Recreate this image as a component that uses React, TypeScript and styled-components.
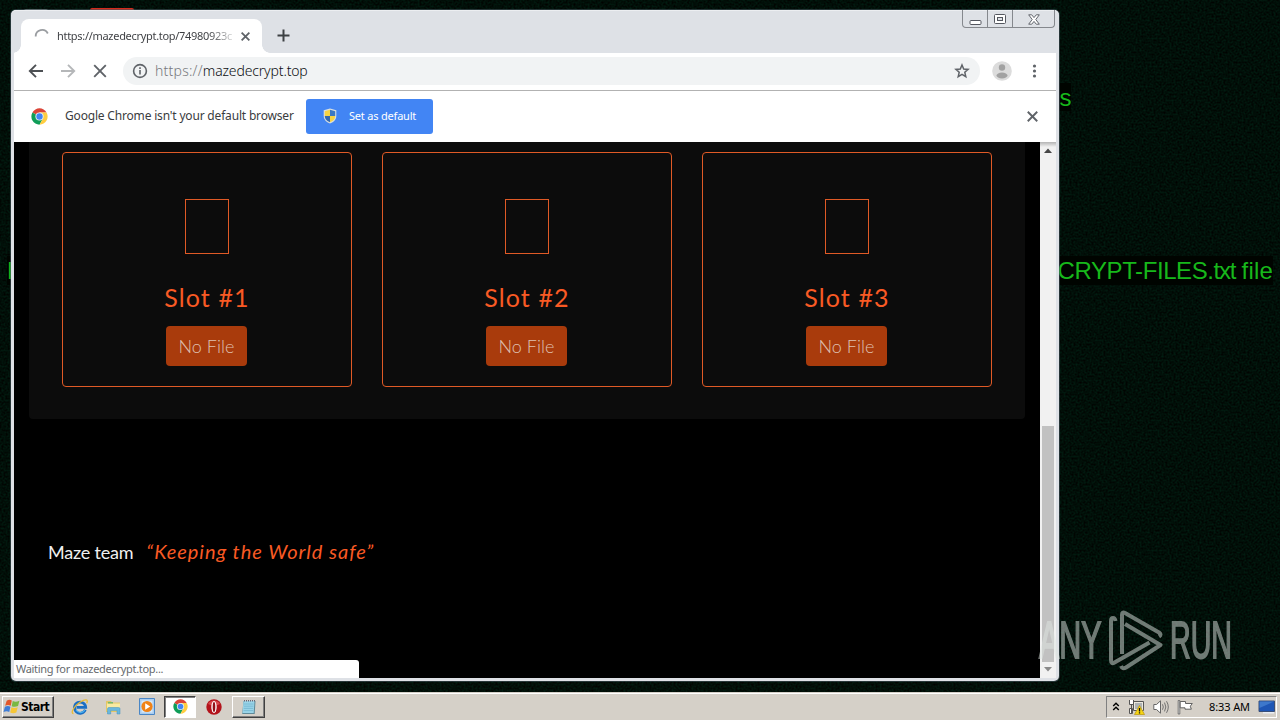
import React from "react";
import styled, { createGlobalStyle, css } from "styled-components";

const ui = `"Noto Sans", "Open Sans", sans-serif`;
const page = `Lato, "Open Sans", sans-serif`;

const Global = createGlobalStyle`
  body { margin: 0; background: #02110a; overflow: hidden; }
  * { box-sizing: border-box; }
  svg { display: block; flex: none; }
`;

const Desktop = styled.div`
  position: relative;
  width: 1280px;
  height: 720px;
  overflow: hidden;
  background: #02110a;
  display: flex;
  flex-direction: column;
  justify-content: flex-end;
`;
const Grain = styled.svg`
  position: absolute;
  inset: 0;
`;
const WallText = styled.div<{ $x?: number; $right?: number; $y: number; $h: number }>`
  position: absolute;
  ${(p) => (p.$right !== undefined ? `right: ${p.$right}px;` : `left: ${p.$x}px;`)}
  top: ${(p) => p.$y}px;
  height: ${(p) => p.$h}px;
  background: #000400;
  color: #17b81b;
  font: 24px "Liberation Sans", sans-serif;
  line-height: ${(p) => p.$h + 1}px;
  letter-spacing: -0.42px;
  white-space: pre;
`;
const Tracked = styled.span<{ $by: number }>`
  letter-spacing: ${(p) => p.$by}px;
`;
const Shortcut = styled.div<{ $x: number; $w: number; $y: number; $c: string }>`
  position: absolute;
  left: ${(p) => p.$x}px;
  top: ${(p) => p.$y}px;
  width: ${(p) => p.$w}px;
  height: 8px;
  background: ${(p) => p.$c};
  border-radius: 2px;
`;

const Window = styled.div`
  position: absolute;
  left: 11px;
  top: 10px;
  width: 1048px;
  height: 671px;
  background: #dee1e6;
  border-radius: 5px;
  padding: 0 3px 3px;
  display: flex;
  flex-direction: column;
  box-shadow: inset 0 1px 0 #eceef1, 0 0 0 1px rgba(70, 85, 95, 0.55);
`;
const TabStrip = styled.div`
  height: 43px;
  flex: none;
  display: flex;
  padding: 9px 0 0 7px;
  align-items: flex-start;
`;
const Tab = styled.div`
  position: relative;
  width: 241px;
  height: 34px;
  background: #fff;
  border-radius: 8px 8px 0 0;
  display: flex;
  align-items: center;
  padding: 0 10px 0 13px;
  &::before,
  &::after {
    content: "";
    position: absolute;
    bottom: 0;
    width: 8px;
    height: 8px;
  }
  &::before { left: -8px; background: radial-gradient(circle at 0 0, #dee1e6 7.5px, #fff 8px); }
  &::after { right: -8px; background: radial-gradient(circle at 100% 0, #dee1e6 7.5px, #fff 8px); }
`;
const TabTitle = styled.div`
  width: 178px;
  margin: 0 6px 0 7px;
  white-space: nowrap;
  font: 11px/18px ${ui};
  letter-spacing: -0.3px;
  background: linear-gradient(90deg, #3a3c40 152px, rgba(60, 64, 67, 0.15) 177px);
  -webkit-background-clip: text;
  color: transparent;
`;
const NewTab = styled.div`
  margin: 10px 0 0 15px;
`;
const WinButtons = styled.div`
  margin: -9px 1px 0 auto;
  height: 18px;
  display: flex;
  border: 1px solid #85888d;
  border-top: 0;
  border-radius: 0 0 4px 4px;
`;
const WinButton = styled.div<{ $w: number }>`
  width: ${(p) => p.$w}px;
  display: flex;
  justify-content: center;
  align-items: center;
  padding-top: 1px;
  & + & { border-left: 1px solid #85888d; }
`;
const Toolbar = styled.div`
  height: 38px;
  flex: none;
  background: #fff;
  border-bottom: 1px solid #b2b2b2;
  display: flex;
  align-items: center;
  padding: 0 14px 1px 14px;
  & > * { flex: none; }
`;
const NavIcons = styled.div`
  display: flex;
  gap: 16px;
  width: 95px;
`;
const Omnibox = styled.div`
  width: 857px;
  height: 28px;
  border-radius: 14px;
  background: #f1f3f4;
  display: flex;
  align-items: center;
  padding: 0 10px 0 9px;
`;
const Url = styled.div`
  flex: 1;
  margin-left: 7px;
  font: 14px/20px ${ui};
  font-weight: 300;
  letter-spacing: -0.15px;
  color: #0d0f12;
  span { color: #77797d; letter-spacing: 0.23px; }
`;
const Avatar = styled.div`
  margin: 0 14px 0 12px;
`;
const InfoBar = styled.div`
  height: 51px;
  flex: none;
  background: #fff;
  display: flex;
  align-items: center;
  padding: 0 18px 0 17px;
`;
const InfoText = styled.div`
  width: 229px;
  margin: -1px 12px 0 17px;
  font: 12px/18px ${ui};
  letter-spacing: -0.18px;
  color: #3a3c40;
  white-space: nowrap;
`;
const DefaultButton = styled.div`
  width: 127px;
  height: 35px;
  border-radius: 3px;
  background: #4285f4;
  color: #fff;
  display: flex;
  align-items: center;
  padding: 0 0 1px 17px;
  gap: 12px;
  font: 11px/18px ${ui};
  letter-spacing: -0.2px;
  white-space: nowrap;
`;
const Push = styled.div`
  margin: -1px 0 0 auto;
`;
const Viewport = styled.div`
  flex: 1;
  min-height: 0;
  display: flex;
  background: #000;
`;
const Page = styled.div`
  position: relative;
  flex: 1;
  display: flex;
  flex-direction: column;
`;
const Panel = styled.div`
  margin: 0 15px;
  height: 277px;
  background: #0c0c0c;
  border-radius: 0 0 4px 4px;
  padding: 10px 33px 0;
  display: flex;
  gap: 30px;
`;
const SlotCard = styled.div`
  width: 290px;
  height: 235px;
  border: 1px solid #e05a26;
  border-radius: 4px;
  display: flex;
  flex-direction: column;
  align-items: center;
  padding-top: 46px;
`;
const MissingGlyph = styled.div`
  width: 44px;
  height: 55px;
  border: 1px solid #e05a26;
`;
const SlotTitle = styled.div`
  margin-top: 28px;
  font: 25px/30px ${page};
  letter-spacing: 1.1px;
  color: #f95a24;
`;
const Badge = styled.div`
  margin: 14px 1px 0 0;
  width: 81px;
  height: 40px;
  border-radius: 4px;
  background: #a93b0c;
  color: #dfc0b0;
  display: flex;
  align-items: center;
  justify-content: center;
  font: 300 18px/24px ${page};
  letter-spacing: 0.05px;
`;
const Footer = styled.div`
  margin: 119px 0 0 34px;
  display: flex;
  align-items: center;
  gap: 13px;
  font: 18px/28px ${page};
  color: #f0f0f0;
  letter-spacing: -0.2px;
`;
const Motto = styled.em`
  color: #f95a24;
  letter-spacing: 0.97px;
  font-size: 20px;
  line-height: 26px;
  padding-bottom: 2px;
`;
const Status = styled.div`
  position: absolute;
  left: 0;
  bottom: 0;
  width: 345px;
  height: 18px;
  border-radius: 0 3px 0 0;
  background: #fff;
  color: #66696d;
  padding-left: 2px;
  font: 11px/18px ${ui};
  letter-spacing: -0.3px;
`;
const ScrollBar = styled.div`
  width: 16px;
  background: linear-gradient(#b4b4b4, #f1f1f1 5px);
  display: flex;
  flex-direction: column;
  align-items: center;
  padding: 6px 0 6px;
`;
const Thumb = styled.div`
  width: 12px;
  height: 236px;
  margin: auto 0 5px;
  background: #c1c1c1;
`;

const Taskbar = styled.div`
  position: relative;
  height: 28px;
  background: #d5d0c8;
  border-top: 1px solid #d5d0c8;
  box-shadow: inset 0 1px 0 #fff;
  display: flex;
  align-items: center;
  padding: 2px 3px 2px 2px;
`;
const raised = css`
  border: 1px solid;
  border-color: #fff #404040 #404040 #fff;
  box-shadow: inset -1px -1px 0 #808080;
`;
const Start = styled.div`
  ${raised}
  width: 52px;
  height: 22px;
  display: flex;
  align-items: center;
  padding-left: 0;
  font: bold 12px/18px "DejaVu Sans Condensed", ${ui};
  letter-spacing: -0.5px;
  color: #000;
`;
const TaskItem = styled.div<{ $w: number; $look?: "raised" | "pressed" }>`
  width: ${(p) => p.$w}px;
  height: 22px;
  display: flex;
  align-items: center;
  justify-content: center;
  ${(p) => p.$look === "raised" && raised}
  ${(p) =>
    p.$look === "pressed" &&
    css`
      background: #fff;
      border: 1px solid;
      border-color: #404040 #fff #fff #404040;
      box-shadow: inset 1px 1px 0 #808080;
    `}
`;
const Quick = styled.div`
  display: flex;
  margin-left: 9px;
`;
const Tray = styled.div`
  margin-left: auto;
  width: 171px;
  height: 22px;
  border: 1px solid;
  border-color: #808080 #fff #fff #808080;
  display: flex;
  align-items: center;
  padding: 0 0 0 5px;
`;
const TrayIcons = styled.div`
  display: flex;
  align-items: center;
  gap: 8px;
`;
const Clock = styled.div`
  margin: 0 8px 0 auto;
  font: 11px/18px ${ui};
  letter-spacing: -0.1px;
  color: #000;
  white-space: nowrap;
`;

const Watermark = styled.div`
  position: absolute;
  left: 1039px;
  top: 608px;
  width: 192px;
  height: 66px;
  display: flex;
  justify-content: space-between;
  align-items: center;
  opacity: 0.5;
  color: #dfe6e2;
`;
const Word = styled.div<{ $squeeze: number }>`
  width: 61px;
  height: 66px;
  span {
    display: block;
    width: max-content;
    transform-origin: 0 0;
    transform: scaleX(${(p) => p.$squeeze});
    font: 52px/65px "Liberation Sans", sans-serif;
    -webkit-text-stroke: 1.8px #dfe6e2;
  }
`;

const Cross = ({ size, w = 2, color = "#5f6368" }: { size: number; w?: number; color?: string }) => (
  <svg width={size} height={size} viewBox="0 0 10 10" stroke={color} strokeWidth={(w * 10) / size}>
    <path d="M.7.7 9.3 9.3M9.3.7.7 9.3" />
  </svg>
);

const ChromeLogo = ({ size }: { size: number }) => (
  <svg width={size} height={size} viewBox="0 0 48 48">
    <circle cx="24" cy="24" r="23" fill="#fff" />
    <path d="M24 24 4.1 12.5A23 23 0 0 1 43.9 12.5H24z" fill="#db4437" />
    <path d="M4.1 12.5A23 23 0 0 0 24 47l10-17.3L24 24z" fill="#0f9d58" />
    <path d="M43.9 12.5A23 23 0 0 1 24 47l10-17.3L24 12.5z" fill="#ffcd40" />
    <circle cx="24" cy="24" r="11.5" fill="#f1f1f1" />
    <circle cx="24" cy="24" r="9" fill="#4285f4" />
  </svg>
);

const Shield = () => (
  <svg width="14" height="16" viewBox="0 0 14 16">
    <path d="M7 .5 13.3 2.3V8C13.300 12 10 14.500 7 15.600 4 14.500.7 12 .7 8V2.300z" fill="#d9dfe0" />
    <path d="M7 1.700V8H1.800V3.200z" fill="#f7d444" />
    <path d="M7 1.700V8h5.200V3.200z" fill="#3a78c4" />
    <path d="M7 14.300V8H1.800c0 3.300 2.600 5.300 5.200 6.300z" fill="#3569b0" />
    <path d="M7 14.300V8h5.200c0 3.300-2.600 5.300-5.200 6.300z" fill="#f7d444" />
  </svg>
);

const StartFlag = () => (
  <svg width="18" height="17" viewBox="0 0 17 16">
    <path d="M3.500 2.500Q6 .8 8.300 2.300L7.300 7.300Q4.800 6 2 7.300z" fill="#e2572b" />
    <path d="M9.200 2.800Q12 4.300 15.500 2.500L14.200 7.600Q11 9 8.200 7.700z" fill="#79b843" />
    <path d="M1.800 8.200Q4.700 7 7 8.200L5.900 13.200Q3.400 11.900.5 13.300z" fill="#3f7dd6" />
    <path d="M8 8.700Q11 10 13.900 8.600L12.600 13.700Q9.500 15 6.800 13.600z" fill="#f6c636" />
  </svg>
);

const IE = () => (
  <svg width="18" height="18" viewBox="0 0 18 18" fill="none">
    <path d="M14.300 11.800A5.600 5.600 0 1 1 14.700 9.300H5.500" stroke="#1b6fc4" strokeWidth="2.800" />
    <path d="M13.800 12.200A5.200 5.200 0 0 1 5 12" stroke="#4db1ee" strokeWidth="1.200" />
    <path d="M2.500 15.500C-1 15.500 3 8 9 4.300S17.500 1.500 15.700 5.300" stroke="#e9bb36" strokeWidth="1.300" />
  </svg>
);

const Explorer = () => (
  <svg width="17" height="16" viewBox="0 0 17 16">
    <path d="M1 2h5l1 1.500h8V13H1z" fill="#e3c766" />
    <path d="M2 4.500h13V12H2z" fill="#f8eaa2" />
    <path d="M3 3h5v1.500H3z" fill="#77b96a" />
    <path d="M2.500 15V9.800Q2.500 8.500 4 8.500h9.500q1.500 0 1.500 1.300V15h-3v-3.500H5.700V15z" fill="#69b7dd" stroke="#4591bd" strokeWidth=".5" />
  </svg>
);

const Player = () => (
  <svg width="16" height="17" viewBox="0 0 16 17">
    <path d="M.5.5h15v16H.5z" fill="#a9cdf0" stroke="#4a86c5" />
    <path d="M2.500 2.500h11v12h-11z" fill="#d7e8f8" />
    <circle cx="8" cy="8.500" r="5.600" fill="#f08317" />
    <path d="M6.200 5.300v6.400l5-3.200z" fill="#fff" />
  </svg>
);

const Opera = () => (
  <svg width="16" height="16" viewBox="0 0 16 16">
    <circle cx="8" cy="8" r="7.700" fill="#b3131b" />
    <path d="M2 5A7 7 0 0 1 14 5Q8 8 2 5z" fill="#d8484c" />
    <ellipse cx="8" cy="8" rx="2.700" ry="5.900" fill="#fff" />
    <ellipse cx="8" cy="8" rx="1.300" ry="5" fill="#931017" />
  </svg>
);

const Notepad = () => (
  <svg width="16" height="16" viewBox="0 0 16 16">
    <path d="M2.500 2h12l-.8 13H1.200z" fill="#5f8a99" />
    <path d="M2.500 2h11l-.8 12H1.500z" fill="#9ad4e8" />
    <path d="M3 5h9.500M2.900 7.200h9.500M2.700 9.400h9.500M2.600 11.600h9.500" stroke="#71b5cf" strokeWidth=".8" />
    <path d="M3 1.800h11" stroke="#667" strokeWidth="1.500" strokeDasharray="1 1" />
  </svg>
);

const NetworkIcon = () => (
  <svg width="17" height="16" viewBox="0 0 17 16">
    <path d="M5.500 2.500h10v9h-10z" fill="#ece9df" stroke="#555" />
    <path d="M7 4h7v6H7z" fill="#aeb3b5" />
    <path d="M1.500 1v4.500h4V1M3.500 5.500v9M1.500 9.500h3v5h-3z" fill="#fff" stroke="#555" />
    <path d="M11.500 6.500 16.500 15.500h-10z" fill="#f6d513" stroke="#b99408" strokeWidth=".7" />
    <path d="M11.500 9v3.500M11.500 13.300v1.300" stroke="#111" strokeWidth="1.300" />
  </svg>
);

const Speaker = () => (
  <svg width="16" height="16" viewBox="0 0 16 16" fill="none" stroke="#666">
    <path d="M.8 5.500h2.700L7.500 1.800v12.400L3.500 10.500H.8z" fill="#fff" />
    <path d="M9.500 5.300q1.600 2.700 0 5.400M11.500 3.600q2.700 4.400 0 8.800M13.500 2.200q3.600 5.800 0 11.600" strokeWidth=".9" />
  </svg>
);

const FlagIcon = () => (
  <svg width="17" height="16" viewBox="0 0 17 16">
    <path d="M1.200 1.500h1.600v13.500H1.200z" fill="#fff" stroke="#555" strokeWidth=".8" />
    <path d="M3.200 2.500h5.300v2h6.800l-2 2.700 1 3H8V8.800H3.200z" fill="#fff" stroke="#555" strokeWidth=".9" />
  </svg>
);

const DesktopIcon = () => (
  <svg width="18" height="14" viewBox="0 0 18 14">
    <path d="M1 1h15.500v10.500H1z" fill="#1e56b5" stroke="#3a4f77" />
    <path d="M1.500 1.500H16L1.500 8z" fill="#3d78cc" />
    <path d="M5 12h11v1.500H5z" fill="#e8edf4" />
  </svg>
);

const PlayMark = () => (
  <svg width="56" height="64" viewBox="0 0 56 64" fill="none" stroke="#dfe6e2" strokeWidth="4" strokeLinejoin="round">
    <path d="M8.500 12Q8 9 6 9Q4 9 4 12V51Q4 55.500 7.500 53.500L42.500 33.500" />
    <path d="M15 45V6Q15 2.500 18 4L52 23.500Q55 25.500 52 27.500" />
    <path d="M18 15 53.500 36 19 58.500Q15.500 60.500 14 57" />
  </svg>
);

export default function App() {
  return (
    <>
      <Global />
      <Desktop>
        <Grain width="1280" height="720">
          <filter id="grain" colorInterpolationFilters="sRGB">
            <feTurbulence type="fractalNoise" baseFrequency="0.5" numOctaves="2" seed="4" />
            <feColorMatrix values="0 0 0 0 0.005  0 0.17 0 0 -0.025  0 0.11 0 0 -0.022  0 0 0 0 1" />
          </filter>
          <rect width="1280" height="720" filter="url(#grain)" />
        </Grain>
        <Shortcut $x={24} $w={24} $y={9} $c="#6f7773" />
        <Shortcut $x={90} $w={44} $y={8} $c="#d42a1c" />
        <WallText $right={209} $y={83} $h={28}>s</WallText>
        <WallText $right={7} $y={256} $h={29}>
          CRYPT-FILES.<Tracked $by={-1.2}>txt</Tracked> <Tracked $by={0.2}>file</Tracked>
        </WallText>
        <WallText $x={7} $y={256} $h={29}>P</WallText>

        <Window>
          <TabStrip>
            <Tab>
              <svg width="16" height="16" viewBox="0 0 16 16" fill="none" stroke="#9a9da1" strokeWidth="1.800">
                <path d="M1.700 8.500A6.400 6.400 0 0 1 13.800 5.500" />
              </svg>
              <TabTitle>https://mazedecrypt.top/74980923c</TabTitle>
              <Cross size={9} w={1.8} />
            </Tab>
            <NewTab>
              <svg width="13" height="13" viewBox="0 0 13 13" stroke="#3c4043" strokeWidth="2">
                <path d="M6.500.5v12M.5 6.500h12" />
              </svg>
            </NewTab>
            <WinButtons>
              <WinButton $w={24}>
                <svg width="13" height="13" viewBox="0 0 13 13">
                  <rect x="1" y="7.500" width="11" height="4" rx="1" fill="#fff" stroke="#54575f" />
                </svg>
              </WinButton>
              <WinButton $w={25}>
                <svg width="12" height="11" viewBox="0 0 12 11" fill="#fff" stroke="#54575f">
                  <rect x=".5" y=".5" width="11" height="9" rx="1" />
                  <rect x="3.500" y="3.500" width="5" height="3" fill="#dee1e6" />
                </svg>
              </WinButton>
              <WinButton $w={42}>
                <svg width="12" height="11" viewBox="0 0 12 11">
                  <path d="M.7.8h3L6 3.600 8.300.8h3L7.800 5.500l3.500 4.700h-3L6 7.400 3.700 10.200h-3l3.500-4.700z" fill="#fff" stroke="#54575f" strokeWidth=".9" />
                </svg>
              </WinButton>
            </WinButtons>
          </TabStrip>

          <Toolbar>
            <NavIcons>
              <svg width="16" height="16" viewBox="0 0 16 16" fill="none" stroke="#4d5054" strokeWidth="1.900">
                <path d="M15 8H2.500M8 1.800 1.800 8 8 14.200" />
              </svg>
              <svg width="16" height="16" viewBox="0 0 16 16" fill="none" stroke="#b5b7b9" strokeWidth="1.900">
                <path d="M1 8h12.500M8 1.800 14.200 8 8 14.200" />
              </svg>
              <svg width="16" height="16" viewBox="0 0 16 16" stroke="#5f6368" strokeWidth="1.900">
                <path d="M2.200 2.200 13.800 13.800M13.800 2.200 2.200 13.800" />
              </svg>
            </NavIcons>
            <Omnibox>
              <svg width="16" height="16" viewBox="0 0 16 16" fill="none" stroke="#5f6368" strokeWidth="1.600">
                <circle cx="8" cy="8" r="6.400" />
                <path d="M8 7v4.500M8 4.300v1.600" />
              </svg>
              <Url><span>https://</span>mazedecrypt.top</Url>
              <svg width="16" height="16" viewBox="0 0 16 16" fill="none" stroke="#5f6368" strokeWidth="1.500">
                <path d="M8 2 9.700 6l4.400.4-3.300 2.900 1 4.300L8 11.300 4.200 13.600l1-4.300L1.900 6.400 6.300 6z" />
              </svg>
            </Omnibox>
            <Avatar>
              <svg width="20" height="20" viewBox="0 0 20 20">
                <circle cx="10" cy="10" r="9.800" fill="#dcdcdc" />
                <circle cx="10" cy="6.500" r="3.200" fill="#a2a2a2" />
                <ellipse cx="10" cy="14.500" rx="5.500" ry="2.900" fill="#a2a2a2" />
              </svg>
            </Avatar>
            <svg width="16" height="16" viewBox="0 0 16 16" fill="#5f6368">
              <circle cx="8.500" cy="3" r="1.600" />
              <circle cx="8.500" cy="8" r="1.600" />
              <circle cx="8.500" cy="13" r="1.600" />
            </svg>
          </Toolbar>

          <InfoBar>
            <ChromeLogo size={17} />
            <InfoText>Google Chrome isn't your default browser</InfoText>
            <DefaultButton>
              <Shield />
              Set as default
            </DefaultButton>
            <Push>
              <Cross size={11} w={1.9} />
            </Push>
          </InfoBar>

          <Viewport>
            <Page>
              <Panel>
                {[1, 2, 3].map((n) => (
                  <SlotCard key={n}>
                    <MissingGlyph />
                    <SlotTitle>Slot #{n}</SlotTitle>
                    <Badge>No File</Badge>
                  </SlotCard>
                ))}
              </Panel>
              <Footer>
                <span>Maze team</span>
                <Motto>“Keeping the World safe”</Motto>
              </Footer>
              <Status>Waiting for mazedecrypt.top...</Status>
            </Page>
            <ScrollBar>
              <svg width="8" height="5" viewBox="0 0 8 5"><path d="M0 5 4 .5 8 5z" fill="#454545" /></svg>
              <Thumb />
              <svg width="8" height="5" viewBox="0 0 8 5"><path d="M0 0 4 4.500 8 0z" fill="#8a8a8a" /></svg>
            </ScrollBar>
          </Viewport>
        </Window>

        <Taskbar>
          <Start>
            <StartFlag />
            Start
          </Start>
          <Quick>
            <TaskItem $w={34}><IE /></TaskItem>
            <TaskItem $w={33}><Explorer /></TaskItem>
            <TaskItem $w={34}><Player /></TaskItem>
            <TaskItem $w={32} $look="pressed"><ChromeLogo size={15} /></TaskItem>
            <TaskItem $w={36}><Opera /></TaskItem>
            <TaskItem $w={33} $look="raised"><Notepad /></TaskItem>
          </Quick>
          <Tray>
            <TrayIcons>
              <svg width="8" height="9" viewBox="0 0 8 9" fill="none" stroke="#000" strokeWidth="1.400">
                <path d="M1.200 4 4 1.200 6.800 4M1.200 8 4 5.200 6.800 8" />
              </svg>
              <NetworkIcon />
              <Speaker />
              <FlagIcon />
            </TrayIcons>
            <Clock>8:33 AM</Clock>
            <DesktopIcon />
          </Tray>
        </Taskbar>

        <Watermark>
          <Word $squeeze={0.585}><span>ANY</span></Word>
          <PlayMark />
          <Word $squeeze={0.55}><span>RUN</span></Word>
        </Watermark>
      </Desktop>
    </>
  );
}
